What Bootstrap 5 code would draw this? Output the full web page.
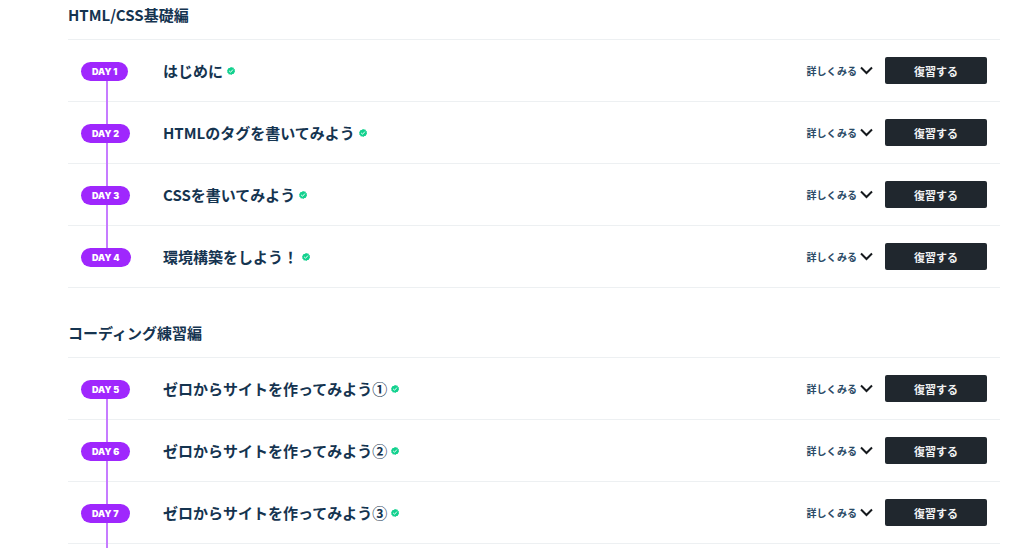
<!DOCTYPE html>
<html lang="ja">
<head>
<meta charset="utf-8">
<meta name="viewport" content="width=device-width, initial-scale=1">
<title>HTML/CSS基礎編</title>
<link href="https://cdn.jsdelivr.net/npm/bootstrap@5.3.0/dist/css/bootstrap.min.css" rel="stylesheet">
<style>
body{font-family:"Noto Sans CJK JP",sans-serif;color:#153450;background:#fff}
.course{padding:0 24px 0 68px}
.chapter{margin-bottom:30px}
.chapter-title{font-size:15px;line-height:24px;font-weight:700;padding:3px 0 12px;margin:0}
.lessons{border-top:1px solid #edf0f2}
.lesson{height:62px;border-bottom:1px solid #edf0f2;padding:0 13px}
.day-col{width:82px;position:relative}
/* connector running from one day to the next */
.linked .day-col::after{content:"";position:absolute;left:25px;top:50%;height:62px;width:2px;background:#c67cff}
.day{position:relative;z-index:1;font:900 9px/19px Inter,sans-serif;padding:0 11px;margin-top:2px;background:#9f27fd;color:#fff}
.lesson-title{font-size:15px;line-height:24px;font-weight:700;margin:0}
.done{width:8px;height:8px}
.detail{font-size:10px;line-height:16px;font-weight:700;color:#2a4a66;gap:3px;margin-right:12px}
.review{width:102px;height:27px;font-size:11px;line-height:16px;font-weight:700;background:#20272e;color:#f2f3f4;border-radius:2px}
.review:hover{background:#333c45;color:#fff}
</style>
</head>
<body>
<svg class="d-none" aria-hidden="true">
<symbol id="check" viewBox="0 0 16 16"><path fill="#12d18e" d="M8 0l2.2 1.2 2.5-.1 1.1 2.2 2 1.5-.3 2.5.5 2.5-1.8 1.7-.9 2.3-2.5.4L8.500 15.800l-2.300-1.100-2.500.1-1.200-2.200-2-1.500.3-2.500L.200 6.200 2 4.500l.9-2.300 2.500-.4z"/><path fill="none" stroke="#fff" stroke-width="1.800" stroke-linecap="round" stroke-linejoin="round" d="M4.800 8.300l2.300 2.200 4.200-4.700"/></symbol>
<symbol id="chevron" viewBox="0 0 13 9"><path fill="none" stroke="#15191d" stroke-width="2" d="M1 1.500l5.500 5.500L12 1.500"/></symbol>
</svg>
<main class="course">
<section class="chapter">
<h2 class="chapter-title">HTML/CSS基礎編</h2>
<ul class="lessons list-unstyled mb-0">
<li class="lesson linked d-flex align-items-center"><div class="day-col align-self-stretch d-flex align-items-center"><span class="day rounded-pill">DAY 1</span></div><h3 class="lesson-title">はじめに</h3><svg class="done ms-1" role="img" aria-label="完了"><use href="#check"/></svg><button type="button" class="detail btn border-0 p-0 ms-auto d-flex align-items-center">詳しくみる<svg width="13" height="9"><use href="#chevron"/></svg></button><button type="button" class="review btn border-0 p-0">復習する</button></li>
<li class="lesson linked d-flex align-items-center"><div class="day-col align-self-stretch d-flex align-items-center"><span class="day rounded-pill">DAY 2</span></div><h3 class="lesson-title">HTMLのタグを書いてみよう</h3><svg class="done ms-1" role="img" aria-label="完了"><use href="#check"/></svg><button type="button" class="detail btn border-0 p-0 ms-auto d-flex align-items-center">詳しくみる<svg width="13" height="9"><use href="#chevron"/></svg></button><button type="button" class="review btn border-0 p-0">復習する</button></li>
<li class="lesson linked d-flex align-items-center"><div class="day-col align-self-stretch d-flex align-items-center"><span class="day rounded-pill">DAY 3</span></div><h3 class="lesson-title">CSSを書いてみよう</h3><svg class="done ms-1" role="img" aria-label="完了"><use href="#check"/></svg><button type="button" class="detail btn border-0 p-0 ms-auto d-flex align-items-center">詳しくみる<svg width="13" height="9"><use href="#chevron"/></svg></button><button type="button" class="review btn border-0 p-0">復習する</button></li>
<li class="lesson d-flex align-items-center"><div class="day-col align-self-stretch d-flex align-items-center"><span class="day rounded-pill">DAY 4</span></div><h3 class="lesson-title">環境構築をしよう！</h3><svg class="done ms-1" role="img" aria-label="完了"><use href="#check"/></svg><button type="button" class="detail btn border-0 p-0 ms-auto d-flex align-items-center">詳しくみる<svg width="13" height="9"><use href="#chevron"/></svg></button><button type="button" class="review btn border-0 p-0">復習する</button></li>
</ul>
</section>
<section class="overflow-hidden">
<h2 class="chapter-title">コーディング練習編</h2>
<ul class="lessons list-unstyled mb-0">
<li class="lesson linked d-flex align-items-center"><div class="day-col align-self-stretch d-flex align-items-center"><span class="day rounded-pill">DAY 5</span></div><h3 class="lesson-title">ゼロからサイトを作ってみよう①</h3><svg class="done ms-1" role="img" aria-label="完了"><use href="#check"/></svg><button type="button" class="detail btn border-0 p-0 ms-auto d-flex align-items-center">詳しくみる<svg width="13" height="9"><use href="#chevron"/></svg></button><button type="button" class="review btn border-0 p-0">復習する</button></li>
<li class="lesson linked d-flex align-items-center"><div class="day-col align-self-stretch d-flex align-items-center"><span class="day rounded-pill">DAY 6</span></div><h3 class="lesson-title">ゼロからサイトを作ってみよう②</h3><svg class="done ms-1" role="img" aria-label="完了"><use href="#check"/></svg><button type="button" class="detail btn border-0 p-0 ms-auto d-flex align-items-center">詳しくみる<svg width="13" height="9"><use href="#chevron"/></svg></button><button type="button" class="review btn border-0 p-0">復習する</button></li>
<li class="lesson linked d-flex align-items-center"><div class="day-col align-self-stretch d-flex align-items-center"><span class="day rounded-pill">DAY 7</span></div><h3 class="lesson-title">ゼロからサイトを作ってみよう③</h3><svg class="done ms-1" role="img" aria-label="完了"><use href="#check"/></svg><button type="button" class="detail btn border-0 p-0 ms-auto d-flex align-items-center">詳しくみる<svg width="13" height="9"><use href="#chevron"/></svg></button><button type="button" class="review btn border-0 p-0">復習する</button></li>
</ul>
<div class="pb-1"></div>
</section>
</main>
<script src="https://cdn.jsdelivr.net/npm/bootstrap@5.3.0/dist/js/bootstrap.bundle.min.js"></script>
</body>
</html>
